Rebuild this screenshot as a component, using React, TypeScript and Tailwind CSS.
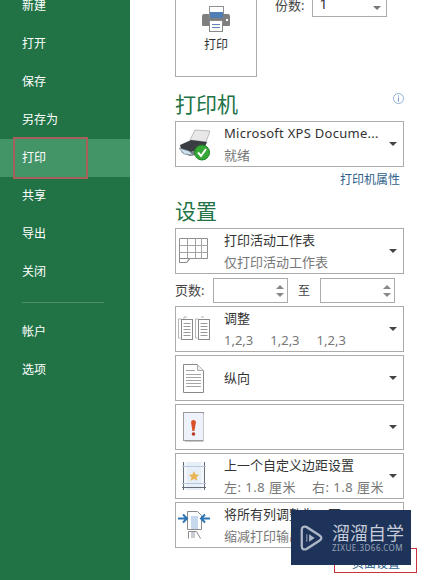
const FONT = "font-['Noto_Sans','Noto_Sans_CJK_SC',sans-serif]";

function Caret() {
  return <div className="mr-[6px] h-0 w-0 border-x-[4px] border-t-[4px] border-x-transparent border-t-[#444]" />;
}

function PrintIcon() {
  return (
    <svg width="28" height="26" viewBox="0 0 28 26">
      <rect x="7.5" y="0.5" width="14" height="11" fill="#fff" stroke="#8f8f8f" />
      <rect x="8" y="6" width="13" height="6" fill="#4f7fb5" />
      <path d="M2 8h5v4h14V8h5a2 2 0 0 1 2 2v9a1 1 0 0 1-1 1H1a1 1 0 0 1-1-1v-9a2 2 0 0 1 2-2z" fill="#7f7f7f" />
      <rect x="7.5" y="14.5" width="13" height="11" fill="#fff" stroke="#8a8a8a" />
      <path d="M10 18.5h8M10 21.5h8" stroke="#5f86b3" />
      <rect x="24" y="13" width="2" height="2" fill="#fff" />
    </svg>
  );
}

function XpsPrinterIcon() {
  return (
    <svg width="32" height="34" viewBox="0 0 32 34">
      <path d="M11 13 L16 3 L31 4 L27 15z" fill="#e8e8e8" stroke="#bbb" />
      <path d="M1 18 L12 13 L28 15 L25 22 L12 25 L2 22z" fill="#3a3d42" />
      <path d="M2 22 L12 25 L25 22 L23 27 L11 29 L3 26z" fill="#7b8288" />
      <path d="M0 21 L10 24 L14 28 L5 27z" fill="#cfe0ea" stroke="#63808f" strokeWidth="0.6" />
      <circle cx="23" cy="25.5" r="7.5" fill="#35a835" stroke="#1f7f25" />
      <path d="M19 25.5 L22 29 L27 22" fill="none" stroke="#fff" strokeWidth="2" />
    </svg>
  );
}

function SheetIcon() {
  return (
    <svg width="30" height="26" viewBox="0 0 30 26">
      <path d="M0.5 0.5h28v20H11l-3 4H0.5z" fill="#fff" stroke="#8f8f8f" />
      <path d="M0.5 7.5h28M0.5 14.5h28M8.5 0.5v20M16.5 0.5v20M22.5 0.5v20" stroke="#a5a5a5" fill="none" />
      <path d="M0.5 20.5h10l-3 4h-7z" fill="#fff" stroke="#8a8a8a" />
    </svg>
  );
}

function CollateIcon() {
  return (
    <svg width="33" height="26" viewBox="0 0 33 26">
      <path d="M0.5 3h3M0.5 3v19h2M6 1h3M6 1v2" fill="none" stroke="#b5b5b5" />
      <rect x="3.5" y="3.5" width="11" height="20" fill="#fff" stroke="#8a8a8a" />
      <path d="M5.5 7.5h7M5.5 10.5h7M5.5 13.5h7M5.5 16.5h7M5.5 19.5h7" stroke="#9a9a9a" />
      <path d="M17.5 3h3M17.5 3v19h2M23 1h3" fill="none" stroke="#b5b5b5" />
      <rect x="20.5" y="3.5" width="11" height="20" fill="#fff" stroke="#8a8a8a" />
      <path d="M22.5 7.5h7M22.5 10.5h7M22.5 13.5h7M22.5 16.5h7M22.5 19.5h7" stroke="#9a9a9a" />
    </svg>
  );
}

function PortraitIcon() {
  return (
    <svg width="22" height="29" viewBox="0 0 22 29">
      <path d="M0.5 0.5h14l6 6v22H0.5z" fill="#fff" stroke="#8a8a8a" />
      <path d="M14.5 0.5v6h6" fill="#eee" stroke="#aaa" />
      <path d="M3 6.5h9M3 10.5h15M3 13.5h15M3 16.5h15M3 19.5h15M3 22.5h15" stroke="#a5a5a5" />
    </svg>
  );
}

function PaperWarnIcon() {
  return (
    <svg width="22" height="30" viewBox="0 0 22 30">
      <rect x="0.5" y="0.5" width="20" height="28" fill="#eef3fb" stroke="#9a9a9a" />
      <path d="M20.5 2v27.5H2" fill="none" stroke="#c9c9c9" />
      <path d="M8 10a2.6 2.6 0 0 1 5 0L11.4 19h-2z" fill="#d9502a" />
      <circle cx="10.5" cy="22" r="1.8" fill="#b83a22" />
    </svg>
  );
}

function MarginIcon() {
  return (
    <svg width="24" height="30" viewBox="0 0 24 30">
      <rect x="1" y="1" width="22" height="28" fill="#f3f6fb" />
      <rect x="5" y="1" width="14" height="28" fill="#e6eef8" />
      <path d="M1.5 1v28M22.5 1v28M0 26.5h24" stroke="#666d78" />
      <path d="M0 5.5h24M0 22.5h24" stroke="#b8c8de" />
      <path d="M12 10l1.6 3.4 3.6.4-2.7 2.4.8 3.6-3.3-1.9-3.3 1.9.8-3.6-2.7-2.4 3.6-.4z" fill="#e9b455" />
    </svg>
  );
}

function FitIcon() {
  return (
    <svg width="32" height="28" viewBox="0 0 32 28">
      <path d="M9.5 0.5h10l4 4v14h-14z" fill="#fff" stroke="#8a8a8a" />
      <rect x="13" y="5" width="7" height="13" fill="#c5d8ee" />
      <path d="M0 7.5h8M5 3.5l4 4-4 4" fill="none" stroke="#2e75b6" strokeWidth="2" />
      <path d="M32 7.5h-8M27 3.5l-4 4 4 4" fill="none" stroke="#2e75b6" strokeWidth="2" />
      <path d="M10.5 27.5v-7h8l4 7" fill="#fff" stroke="#8a8a8a" />
      <rect x="13" y="21" width="4" height="6" fill="#c9ccd2" />
    </svg>
  );
}

function Dropdown({ icon, iconPad, title, sub, className }: { icon: React.ReactNode; iconPad: string; title?: React.ReactNode; sub?: React.ReactNode; className?: string }) {
  return (
    <div className={"flex h-[46px] w-[229px] items-center border border-[#ababab] bg-white " + (className ?? "")}>
      <div className={"flex w-[48px] shrink-0 " + iconPad}>{icon}</div>
      <div className="min-w-0 flex-1">
        {title && <div className="text-[13px] leading-[22px] whitespace-nowrap text-[#333]">{title}</div>}
        {sub && <div className="text-[13px] leading-[23px] whitespace-nowrap text-[#777]">{sub}</div>}
      </div>
      <Caret />
    </div>
  );
}

function Spinner({ width }: { width: string }) {
  return (
    <div className={"flex h-[25px] items-center justify-end border border-[#ababab] pr-[3px] " + width}>
      <div className="flex flex-col gap-[4px]">
        <div className="h-0 w-0 border-x-[4px] border-b-[4px] border-x-transparent border-b-[#888]" />
        <div className="h-0 w-0 border-x-[4px] border-t-[4px] border-x-transparent border-t-[#888]" />
      </div>
    </div>
  );
}

const navTop = ["新建", "打开", "保存", "另存为", "打印", "共享", "导出", "关闭"];

export default function App() {
  return (
    <div className={"relative flex h-[580px] w-[435px] overflow-hidden bg-white " + FONT}>
      {/* Sidebar */}
      <aside className="w-[130px] shrink-0 bg-[#217346] text-[12px] text-white">
        <div className="-mt-[13px]">
          {navTop.map((label) => (
            <div key={label} className={"flex h-[38px] items-center pl-[22px] " + (label === "打印" ? "bg-[#439467]" : "")}>
              {label}
            </div>
          ))}
        </div>
        <div className="mx-[22px] mt-[11px] h-px w-[82px] bg-[#4a9068]" />
        <div className="mt-[10px]">
          <div className="flex h-[38px] items-center pl-[22px]">帐户</div>
          <div className="flex h-[38px] items-center pl-[22px]">选项</div>
        </div>
      </aside>

      {/* Main */}
      <main className="flex-1 pl-[45px]">
        <div className="-mt-[20px] flex h-[97px] items-start">
          <div className="flex h-[97px] w-[82px] flex-col items-center border border-[#ababab] pt-[25px]">
            <PrintIcon />
            <div className="mt-[5px] text-[12px] leading-[16px] text-[#333]">打印</div>
          </div>
          <div className="ml-[18px] flex h-[37px] items-end">
            <span className="pb-[3px] text-[13px] leading-[18px] text-[#444]">份数:</span>
            <div className="ml-[8px] flex h-[28px] w-[75px] items-end justify-between border border-[#ababab] pr-[5px] pl-[6px]">
              <span className="text-[14px] leading-[24px] text-[#333]">1</span>
              <div className="mb-[6px] h-0 w-0 border-x-[4px] border-t-[4px] border-x-transparent border-t-[#777]" />
            </div>
          </div>
        </div>

        <div className="flex h-[44px] w-[229px] items-end justify-between pb-[3px]">
          <h2 className="text-[21px] leading-[28px] font-normal text-[#217346]">打印机</h2>
          <svg className="mb-[14px]" width="11" height="11" viewBox="0 0 11 11">
            <circle cx="5.5" cy="5.5" r="5" fill="none" stroke="#8fb3d9" />
            <path d="M5.5 2.5v1M5.5 4.5v4" stroke="#6f97c2" />
          </svg>
        </div>
        <Dropdown
          iconPad="pl-[3px]"
          icon={<XpsPrinterIcon />}
          title={<span className="tracking-[0.27px]">Microsoft XPS Docume...</span>}
          sub="就绪"
        />
        <div className="mt-[4px] w-[225px] text-right text-[12px] leading-[18px] text-[#2f5f8a]">打印机属性</div>

        <h2 className="mt-[8px] text-[21px] leading-[28px] font-normal text-[#217346]">设置</h2>
        <Dropdown className="mt-[3px]" iconPad="pl-[3px]" icon={<SheetIcon />} title="打印活动工作表" sub="仅打印活动工作表" />
        <div className="mt-[4px] flex items-center">
          <span className="w-[38px] text-[13px] text-[#444]">页数:</span>
          <Spinner width="w-[75px]" />
          <span className="w-[32px] text-center text-[12px] text-[#444]">至</span>
          <Spinner width="w-[75px]" />
        </div>
        <Dropdown
          className="mt-[3px]"
          iconPad="pl-[2px]"
          icon={<CollateIcon />}
          title="调整"
          sub={
            <div className="flex gap-[17px]">
              <span>1,2,3</span>
              <span>1,2,3</span>
              <span>1,2,3</span>
            </div>
          }
        />
        <Dropdown className="mt-[3px]" iconPad="pl-[7px]" icon={<PortraitIcon />} title="纵向" />
        <Dropdown className="mt-[3px]" iconPad="pl-[7px]" icon={<PaperWarnIcon />} />
        <Dropdown
          className="mt-[3px]"
          iconPad="pl-[6px]"
          icon={<MarginIcon />}
          title="上一个自定义边距设置"
          sub={
            <div className="flex tracking-[0.5px]">
              <span className="w-[88px]">左: 1.8 厘米</span>
              <span>右: 1.8 厘米</span>
            </div>
          }
        />
        <Dropdown className="mt-[3px]" iconPad="pl-[2px]" icon={<FitIcon />} title="将所有列调整为一页" sub="缩减打印输出的宽度" />
      </main>

      {/* Red highlight on 打印 */}
      <div className="absolute top-[137px] left-[13px] h-[42px] w-[75px] border-2 border-[#a5605a]" />

      {/* Red highlight on 页面设置, mostly under the watermark */}
      <div className="absolute top-[548px] left-[334px] h-[25px] w-[83px] border border-[#c8323c]" />
      <div className="absolute top-[556px] left-[352px] text-[12px] leading-[16px] text-[#2f5f8a]">页面设置</div>

      {/* Watermark */}
      <div className="absolute top-[510px] left-[291px] flex h-[55px] w-[120px] items-center bg-[#1e3359] pl-[8px]">
        <svg width="24" height="26" viewBox="0 0 26 28">
          <path d="M3 5c0-3 2-4 5-3l14 9c3 2 3 4 0 6L8 26c-3 1-5 0-5-3z" fill="none" stroke="#aeb7c6" strokeWidth="2.5" />
          <path d="M11 10l6 4-6 4z" fill="#aeb7c6" />
          <path d="M8.5 10v8" stroke="#aeb7c6" />
        </svg>
        <div className="ml-[9px]">
          <div className="text-[18px] leading-[20px] text-[#c6ccd8]">溜溜自学</div>
          <div className="text-[8px] leading-[10px] tracking-[0.5px] whitespace-nowrap text-[#9aa5b8]">ZIXUE.3D66.COM</div>
        </div>
      </div>
    </div>
  );
}
